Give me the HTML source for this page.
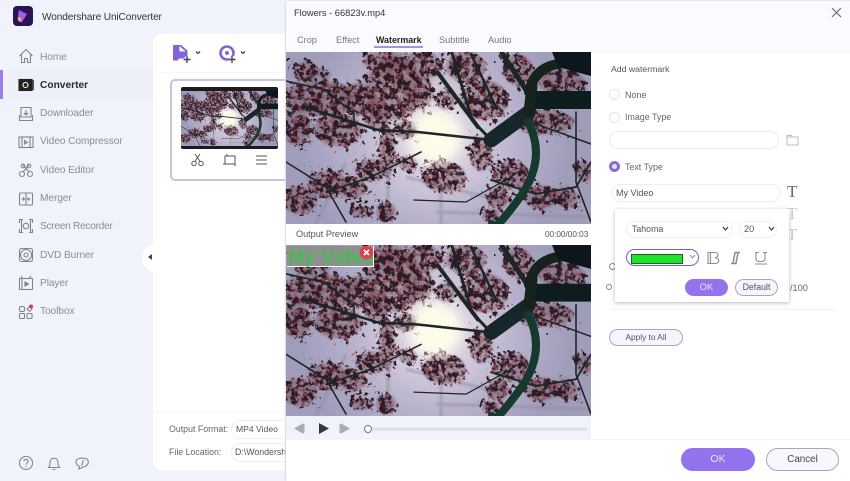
<!DOCTYPE html>
<html><head><meta charset="utf-8"><style>
html,body{margin:0;padding:0}
body{width:850px;height:481px;overflow:hidden;position:relative;background:#f0f3fb;font-family:"Liberation Sans",sans-serif;font-size:10px;color:#555}
.a{position:absolute;white-space:nowrap}
.nav{position:absolute;left:40px;font-size:10.2px;color:#8b8d94;letter-spacing:-.1px;line-height:14px;margin-top:1px}
.ic{position:absolute;left:18px;width:16px;height:16px;fill:none;stroke:#82858c;stroke-width:1.1}
.pill{position:absolute;box-sizing:border-box;border:1px solid #eceef3;border-radius:11px;background:#fff}
.radio{position:absolute;left:609px;width:11px;height:11px;box-sizing:border-box;border:1.5px solid #e3e4ea;border-radius:50%;background:#fff}
.t{position:absolute;white-space:nowrap;line-height:13px;color:#555}
</style></head><body>
<svg width="0" height="0" style="position:absolute"><defs>
<radialGradient id="sun" cx="149" cy="85" r="135" gradientUnits="userSpaceOnUse"><stop offset="0" stop-color="#fffdf0"/><stop offset=".13" stop-color="#f6f0ec"/><stop offset=".28" stop-color="#d6cfe0"/><stop offset=".6" stop-color="#b9b3cc"/><stop offset="1" stop-color="#a09dbb"/></radialGradient>
<filter id="n1" x="0" y="0" width="100%" height="100%" color-interpolation-filters="sRGB"><feTurbulence type="fractalNoise" baseFrequency=".17" numOctaves="3" seed="3" result="t"/><feDisplacementMap in="SourceGraphic" in2="t" scale="30" result="d"/><feColorMatrix in="t" type="matrix" values="0 0 0 0 0 0 0 0 0 0 0 0 0 0 0 9 0 0 0 -3.800" result="m"/><feComposite in="d" in2="m" operator="in"/></filter>
<filter id="n2" x="0" y="0" width="100%" height="100%" color-interpolation-filters="sRGB"><feTurbulence type="fractalNoise" baseFrequency=".25" numOctaves="2" seed="11" result="t"/><feDisplacementMap in="SourceGraphic" in2="t" scale="24" result="d"/><feColorMatrix in="t" type="matrix" values="0 0 0 0 0 0 0 0 0 0 0 0 0 0 0 7 0 0 0 -3.700" result="m"/><feComposite in="d" in2="m" operator="in"/></filter>
<filter id="bb"><feGaussianBlur stdDeviation="1.100"/></filter>
<filter id="b0"><feGaussianBlur stdDeviation=".35"/></filter>
<filter id="b1"><feGaussianBlur stdDeviation=".45"/></filter>
<filter id="b4"><feGaussianBlur stdDeviation="5"/></filter>
<g id="cl">
<ellipse cx="20" cy="20" rx="13" ry="10"/><ellipse cx="38" cy="23" rx="6" ry="6"/><ellipse cx="34" cy="46" rx="38" ry="17"/><ellipse cx="72" cy="47" rx="19" ry="16"/><ellipse cx="10" cy="76" rx="15" ry="17"/><ellipse cx="52" cy="78" rx="24" ry="16"/><ellipse cx="90" cy="62" rx="13" ry="15"/><ellipse cx="108" cy="36" rx="28" ry="32"/><ellipse cx="100" cy="10" rx="22" ry="11"/><ellipse cx="136" cy="14" rx="20" ry="14"/><ellipse cx="132" cy="40" rx="15" ry="17"/><ellipse cx="120" cy="78" rx="12" ry="9"/><ellipse cx="42" cy="132" rx="20" ry="13"/><ellipse cx="13" cy="148" rx="17" ry="14"/><ellipse cx="66" cy="136" rx="14" ry="11"/><ellipse cx="85" cy="118" rx="16" ry="11"/><ellipse cx="122" cy="112" rx="9" ry="7"/><ellipse cx="158" cy="125" rx="22" ry="15"/><ellipse cx="195" cy="102" rx="11" ry="17"/><ellipse cx="225" cy="123" rx="19" ry="14"/><ellipse cx="212" cy="146" rx="11" ry="11"/><ellipse cx="255" cy="145" rx="17" ry="12"/><ellipse cx="280" cy="145" rx="11" ry="10"/><ellipse cx="180" cy="15" rx="20" ry="15"/><ellipse cx="198" cy="48" rx="24" ry="20"/><ellipse cx="258" cy="70" rx="30" ry="12"/><ellipse cx="275" cy="30" rx="24" ry="12"/><ellipse cx="232" cy="18" rx="15" ry="15"/><ellipse cx="101" cy="100" rx="8" ry="26"/><ellipse cx="100" cy="160" rx="10" ry="10"/><ellipse cx="298" cy="120" rx="8" ry="10"/><ellipse cx="205" cy="164" rx="8" ry="7"/><ellipse cx="75" cy="160" rx="12" ry="6"/><ellipse cx="160" cy="48" rx="10" ry="10"/>
</g>
<symbol id="ph" viewBox="0 0 305 172" preserveAspectRatio="none">
<rect width="305" height="172" fill="url(#sun)"/>
<g stroke="#8f8b99" stroke-opacity=".55" fill="none" filter="url(#bb)"><path d="M102 172V100L98 20M155 172V130M30 172L60 110M150 160L305 165M120 125L220 150M75 30L110 20" stroke-width="3"/></g>
<use href="#cl" fill="#6a4a56" fill-opacity=".4" filter="url(#bb)"/>
<use href="#cl" fill="#2c1a24" filter="url(#n1)"/>
<use href="#cl" fill="#9a5058" fill-opacity=".8" filter="url(#n2)"/>
<ellipse cx="149" cy="85" rx="24" ry="26" fill="#fffde9" opacity=".8" filter="url(#b4)"/>
<g fill="none" stroke-linecap="round" filter="url(#b0)">
<g stroke="#1a2526"><path d="M166 1L186 68L205 88" stroke-width="3"/><path d="M152 21L192 75" stroke-width="4"/><path d="M216 1L240 38" stroke-width="5"/><path d="M185 2L210 55" stroke-width="2.500"/><path d="M19 55L92 78L132 80L205 88" stroke-width="2.500"/><path d="M0 29L40 38L68 62V72" stroke-width="1.600"/><path d="M0 110L40 135L60 170" stroke-width="1.600"/><path d="M40 140L85 125L135 100" stroke-width="1.600"/><path d="M205 128L250 142L290 135L305 110" stroke-width="1.800"/><path d="M250 72L305 92" stroke-width="1.500"/><path d="M290 60V130L305 170" stroke-width="1.600"/><path d="M128 148L180 150L225 125" stroke-width="1.200"/></g>
<path d="M205 88L242 61" stroke="#14262a" stroke-width="15"/>
<path d="M242 70Q262 108 232 148T206 172" stroke="#15382f" stroke-width="8"/>
<path d="M244 48H305" stroke="#0f1c1e" stroke-width="18" stroke-linecap="butt"/>
<path d="M243 40Q248 16 272 12T305 5" stroke="#14231f" stroke-width="10"/>
<path d="M243 60L246 35" stroke="#13201f" stroke-width="11"/>
<path d="M266 0L305 0V24L290 20L272 15Z" fill="#10191c"/>
</g>
</symbol>
</defs></svg>

<!-- sidebar -->
<svg class="a" style="left:13px;top:6px" width="20" height="20" viewBox="0 0 20 20"><rect width="20" height="20" rx="4" fill="#2a1458"/><path d="M6 4L14 8L9 16C6 15 4 12 6 4Z" fill="#a45be8"/><path d="M5 11C8 11 9 13 8 16C6 16 4 14 5 11Z" fill="#f4a470"/></svg>
<div class="a" style="left:42px;top:11px;font-size:10.100px;letter-spacing:-.12px;color:#333;line-height:14px">Wondershare UniConverter</div>
<div class="a" style="left:8px;top:70px;width:145px;height:29px;background:#edf0f8"></div>
<div class="a" style="left:0;top:70px;width:2.500px;height:29px;background:#9a80e8"></div>
<svg class="ic" style="top:48px" viewBox="0 0 16 16"><path d="M1.500 8L8 1.500L14.500 8M3.500 6.500V14.500H6.500V10.500H9.500V14.500H12.500V6.500"/></svg>
<div class="nav" style="top:50px">Home</div>
<svg class="ic" style="top:77px;stroke:#222" viewBox="0 0 16 16"><rect x="1" y="2.500" width="13" height="11" fill="#222"/><path d="M15.200 3V13" /><circle cx="7.500" cy="8" r="2.500" stroke="#fff"/></svg>
<div class="nav" style="top:78px;color:#2a2a30;font-weight:bold;letter-spacing:0">Converter</div>
<svg class="ic" style="top:106px" viewBox="0 0 16 16"><path d="M3 1.500H13V11H3ZM1.500 9V14.500H14.500V9M8 4V8.500M5.800 6.800L8 9L10.200 6.800"/></svg>
<div class="nav" style="top:106px">Downloader</div>
<svg class="ic" style="top:134px" viewBox="0 0 16 16"><rect x="1" y="3" width="14" height="10.500"/><path d="M4 3V13.500M12 3V13.500M6.500 6.500L9.500 8.300L6.500 10Z"/></svg>
<div class="nav" style="top:134px">Video Compressor</div>
<svg class="ic" style="top:162px" viewBox="0 0 16 16"><circle cx="4" cy="12" r="2.500"/><circle cx="12" cy="12" r="2.500"/><path d="M5 10L11 3M11 10L5 3"/><circle cx="5" cy="4" r="1.800"/><circle cx="11" cy="4" r="1.800"/></svg>
<div class="nav" style="top:163px">Video Editor</div>
<svg class="ic" style="top:191px" viewBox="0 0 16 16"><rect x="1.500" y="2" width="13" height="12" rx="1"/><path d="M8 2V14M3.500 8H6.500M5 6.500L6.500 8L5 9.500M12.500 8H9.500M11 6.500L9.500 8L11 9.500"/></svg>
<div class="nav" style="top:191px">Merger</div>
<svg class="ic" style="top:218px" viewBox="0 0 16 16"><path d="M1.500 5V1.500H5M11 1.500H14.500V5M1.500 11V14.500H5M11 14.500H14.500V11M3.500 1.500V14.500M12.500 1.500V14.500"/><circle cx="8" cy="8" r="2.800"/></svg>
<div class="nav" style="top:219px;letter-spacing:-.3px">Screen Recorder</div>
<svg class="ic" style="top:247px" viewBox="0 0 16 16"><rect x="1.500" y="1.500" width="13" height="13" rx="2"/><circle cx="8" cy="8" r="5.500"/><circle cx="8" cy="8" r="2"/></svg>
<div class="nav" style="top:248px">DVD Burner</div>
<svg class="ic" style="top:275px" viewBox="0 0 16 16"><rect x="1.500" y="3.500" width="13" height="11"/><path d="M4 3.500V14.500M4.500 3.500L3 1M11 3.500L13 .8"/><path d="M7 7L10.500 9L7 11Z" fill="#777a82"/></svg>
<div class="nav" style="top:276px">Player</div>
<svg class="ic" style="top:304px" viewBox="0 0 16 16"><rect x="1.500" y="2.500" width="5" height="5" rx="1.500"/><rect x="1.500" y="9.500" width="5" height="5" rx="1"/><rect x="9" y="9.500" width="5" height="5" rx="1"/><path d="M9 5L11.500 2.500L14 5L11.500 7.500Z"/><circle cx="13" cy="2.500" r="2" fill="#c9434d" stroke="none"/></svg>
<div class="nav" style="top:304px">Toolbox</div>
<svg class="ic" style="top:455px" viewBox="0 0 16 16"><circle cx="8" cy="8" r="6.500"/><path d="M5.800 6.200C6 3.800 10 3.800 10.200 6.200C10.300 7.800 8 7.800 8 9.800M8 11.200V12.500"/></svg>
<svg class="ic" style="top:455px;left:46px" viewBox="0 0 16 16"><path d="M2.500 12.500C4.500 10.500 3.500 8 4.500 5.500C5.500 2.500 10.500 2.500 11.500 5.500C12.500 8 11.500 10.500 13.500 12.500ZM6.500 14.500H9.500"/></svg>
<svg class="ic" style="top:455px;left:74px" viewBox="0 0 16 16"><path d="M2 6.500C2 3.500 7 2.500 12 3.500C15 4.500 15 9 12 11L8 12.500L5 14L5.500 11.500C3 10.500 2 8.500 2 6.500ZM9.500 5L7.500 11"/></svg>

<!-- main panel -->
<div class="a" style="left:153px;top:34px;width:140px;height:436px;background:#fff;border-radius:8px 0 0 8px"></div>
<div class="a" style="left:153px;top:72px;width:133px;height:1px;background:#f8f8fb"></div>
<div class="a" style="left:142px;top:244px;width:16px;height:28px;background:#fff;border-radius:14px 0 0 14px"></div>
<div class="a" style="left:148px;top:254px;width:0;height:0;border:3.200px solid transparent;border-right:4px solid #444;border-left:0"></div>
<svg class="a" style="left:172px;top:43px" width="80" height="22" viewBox="0 0 80 22"><path d="M1.500 2.500H9L15 8V15H7L5.500 17H1.500Z" fill="#8363dd" stroke="#8363dd"/><path d="M8 3.500V8H13" fill="#fff" stroke="#fff"/><path d="M15 13V20M11.500 16.500H18.500" stroke="#fff" stroke-width="3.500"/><path d="M15 13V20M11.500 16.500H18.500" stroke="#444" stroke-width="1.400"/><path d="M24 8.500L26 10.500L28 8.500" stroke="#444" fill="none" stroke-width="1.300"/><circle cx="55" cy="10" r="6.500" fill="none" stroke="#8363dd" stroke-width="2.600"/><circle cx="55" cy="10" r="2" fill="#8363dd"/><path d="M60 13V20M56.500 16.500H63.500" stroke="#fff" stroke-width="3.500"/><path d="M60 13V20M56.500 16.500H63.500" stroke="#444" stroke-width="1.400"/><path d="M69 8.500L71 10.500L73 8.500" stroke="#444" fill="none" stroke-width="1.300"/></svg>
<div class="a" style="left:170px;top:79px;width:125px;height:102px;box-sizing:border-box;border:2px solid #c6c4de;border-radius:5px;background:#fff"></div>
<div class="a" style="left:181px;top:87px;width:97px;height:62px;background:#1b1a1e;border-radius:2px"></div>
<svg class="a" style="left:181px;top:91px" width="97" height="55"><use href="#ph" width="97" height="55"/></svg>
<svg class="a" style="left:190px;top:153px" width="82" height="14" viewBox="0 0 82 14" fill="none" stroke="#555" stroke-width="1"><circle cx="4" cy="10.500" r="2.200"/><circle cx="11" cy="10.500" r="2.200"/><path d="M5 8.500L10 1M10 8.500L5 1"/><path d="M35 3H45V11H35ZM37 1V3M45 11V13M33 11H35"/><path d="M66 3H77M66 7H77M66 11H77"/></svg>
<div class="a" style="left:153px;top:412px;width:133px;height:1px;background:#f4f5f8"></div>
<div class="t" style="left:169px;top:423px;font-size:8.800px;color:#666">Output Format:</div>
<div class="t" style="left:169px;top:446px;font-size:8.800px;color:#666">File Location:</div>
<div class="pill" style="left:231px;top:420px;width:70px;height:19px"></div>
<div class="pill" style="left:231px;top:443px;width:70px;height:19px"></div>
<div class="t" style="left:236px;top:423px;font-size:8.600px">MP4 Video</div>
<div class="t" style="left:235px;top:446px;font-size:8.800px">D:\Wondershare</div>

<!-- dialog -->
<div class="a" style="left:286px;top:1px;width:564px;height:480px;background:#fff;box-shadow:-1px 0 1px #d8dae2"></div>
<div class="a" style="left:286px;top:0;width:564px;height:1px;background:#e6e8ef"></div>
<div class="a" style="left:286px;top:1px;width:564px;height:51px;background:#f9fbfe"></div>
<div class="t" style="left:294px;top:7px;font-size:9.300px;color:#333">Flowers - 66823v.mp4</div>
<svg class="a" style="left:831px;top:7px" width="11" height="11" viewBox="0 0 11 11"><path d="M1 1L10 10M10 1L1 10" stroke="#666" stroke-width="1.100"/></svg>
<div class="t" style="left:297px;top:34px;font-size:9.200px;color:#777">Crop</div>
<div class="t" style="left:336px;top:34px;font-size:9.200px;color:#777">Effect</div>
<div class="t" style="left:376px;top:34px;font-size:8.900px;color:#222;font-weight:bold">Watermark</div>
<div class="a" style="left:374px;top:46px;width:49px;height:1.500px;background:#a793dc"></div>
<div class="t" style="left:439px;top:34px;font-size:9.200px;color:#777">Subtitle</div>
<div class="t" style="left:488px;top:34px;font-size:9.200px;color:#777">Audio</div>
<div class="a" style="left:591px;top:52px;width:259px;height:1px;background:#f4f5f8"></div>

<svg class="a" style="left:286px;top:52px" width="305" height="172"><use href="#ph" width="305" height="172"/></svg>
<div class="t" style="left:296px;top:228px;font-size:9.100px;color:#555">Output Preview</div>
<div class="t" style="left:545px;top:228px;font-size:8.200px;color:#555">00:00/00:03</div>
<svg class="a" style="left:286px;top:245px" width="305" height="171"><use href="#ph" width="305" height="171"/></svg>
<div class="a" style="left:287px;top:246px;width:87px;height:21px;background:#8d908c;box-sizing:border-box;border-bottom:1px solid #fff;border-right:1px solid #fff"></div>
<div class="a" style="left:289px;top:247px;font-size:18px;color:#27d03a;line-height:20px;letter-spacing:1.400px;filter:url(#b1)">My Video</div>
<svg class="a" style="left:359px;top:245px" width="15" height="15" viewBox="0 0 15 15"><circle cx="7.500" cy="7.500" r="6.800" fill="#e0414d"/><path d="M5 5L10 10M10 5L5 10" stroke="#fff" stroke-width="1.600"/></svg>

<div class="a" style="left:286px;top:416px;width:305px;height:23px;background:#f1f3fa"></div>
<svg class="a" style="left:286px;top:416px" width="305" height="23" viewBox="0 0 305 23"><path d="M9 12.500L17 8V17ZM18 8V17" fill="#a9acb7" stroke="#a9acb7"/><path d="M33 7V18L43 12.500Z" fill="#33363b"/><path d="M55 8V17L63 12.500ZM54 8V17" fill="#a9acb7" stroke="#a9acb7"/><path d="M86 13H301" stroke="#dfe1e9" stroke-width="3"/><circle cx="82" cy="13" r="3.500" fill="#fff" stroke="#777" stroke-width="1"/></svg>

<!-- right panel -->
<div class="t" style="left:611px;top:63px;font-size:8.700px;color:#555">Add watermark</div>
<div class="radio" style="top:89px"></div>
<div class="t" style="left:625px;top:89px;font-size:9px;color:#666">None</div>
<div class="radio" style="top:112px"></div>
<div class="t" style="left:625px;top:111px;font-size:8.900px;color:#666">Image Type</div>
<div class="pill" style="left:609px;top:131px;width:170px;height:18px;border-radius:9px"></div>
<svg class="a" style="left:786px;top:134px" width="13" height="12" viewBox="0 0 13 12" fill="none" stroke="#bbbcc3"><path d="M1 1.500H5.500L6.500 3H12V11H1ZM1 3H6.500"/></svg>
<div class="a" style="left:609px;top:161px;width:11px;height:11px;box-sizing:border-box;border:3px solid #8b6bd3;border-radius:50%;background:#e8e2f6"></div>
<div class="t" style="left:625px;top:161px;font-size:8.900px;color:#666">Text Type</div>
<div class="pill" style="left:611px;top:184px;width:170px;height:18px;border-radius:9px"></div>
<div class="t" style="left:616px;top:187px;font-size:9px;color:#555">My Video</div>
<div class="t" style="left:787px;top:183px;font-family:'Liberation Serif',serif;font-size:17px;line-height:18px;color:#666">T</div>
<div class="t" style="left:787px;top:205px;font-family:'Liberation Serif',serif;font-size:17px;line-height:18px;color:#ccc">T</div>
<div class="t" style="left:787px;top:226px;font-family:'Liberation Serif',serif;font-size:17px;line-height:18px;color:#ccc">T</div>
<div class="a" style="left:609px;top:263px;width:5px;height:5px;border:1px solid #888;border-radius:50%"></div>
<div class="a" style="left:606px;top:284px;width:4px;height:4px;border:1px solid #888;border-radius:50%"></div>
<div class="t" style="left:790px;top:282px;font-size:9.200px;color:#666">/100</div>
<div class="a" style="left:609px;top:309px;width:226px;height:1px;background:#f1f1f4"></div>
<div class="a" style="left:609px;top:329px;width:74px;height:17px;box-sizing:border-box;border:1px solid #a9a6c0;border-radius:9px;background:#f7f4fd;text-align:center;font-size:8.300px;line-height:15px;color:#555">Apply to All</div>

<!-- popup -->
<div class="a" style="left:615px;top:209px;width:174px;height:93px;background:#fff;box-shadow:0 1px 4px rgba(0,0,0,.28)"></div>
<div class="pill" style="left:626px;top:221px;width:107px;height:17px;border-radius:9px;border-color:#f0f0f4"></div>
<div class="t" style="left:632px;top:223px;font-size:8.800px;color:#555">Tahoma</div>
<svg class="a" style="left:722px;top:226px" width="7" height="6"><path d="M1 1L3.500 4L6 1" fill="none" stroke="#444" stroke-width="1.300"/></svg>
<div class="pill" style="left:739px;top:221px;width:38px;height:17px;border-radius:9px;border-color:#f0f0f4"></div>
<div class="t" style="left:744px;top:223px;font-size:9.200px;color:#555">20</div>
<svg class="a" style="left:768px;top:226px" width="7" height="6"><path d="M1 1L3.500 4L6 1" fill="none" stroke="#444" stroke-width="1.300"/></svg>
<div class="a" style="left:626px;top:249px;width:73px;height:17px;box-sizing:border-box;border:1.300px solid #7a5fc8;border-radius:9px;background:#fff"></div>
<div class="a" style="left:631px;top:254px;width:50px;height:8px;background:#1fe22a;border:.7px solid #245f28"></div>
<svg class="a" style="left:689px;top:254px" width="7" height="6"><path d="M1 1L3.500 4L6 1" fill="none" stroke="#999" stroke-width="1.200"/></svg>
<svg class="a" style="left:707px;top:251px" width="66" height="14" viewBox="0 0 66 14" fill="none" stroke="#8c8c92" stroke-width="1.100"><path d="M1 1.500H8C12 1.500 12 6.500 8 6.700C13 7 13 12.500 8 12.500H1ZM3.500 1.500V12.500"/><path d="M33 1.500H28L26 12.500H24M31 1.500L29 12.500H25" stroke-width="1.500"/><path d="M49 1.500V8C49 11.500 58 11.500 58 8V1.500M48 1.500H52M56 1.500H60M48 13H60"/></svg>
<div class="a" style="left:685px;top:279px;width:43px;height:17px;background:#9372ee;border-radius:9px;text-align:center;color:#e9e2fb;font-size:9.500px;line-height:17px">OK</div>
<div class="a" style="left:735px;top:279px;width:43px;height:17px;box-sizing:border-box;border:1px solid #a9a6c0;border-radius:9px;background:#f7f4fd;text-align:center;font-size:8.800px;line-height:15px;color:#555">Default</div>

<!-- footer -->
<div class="a" style="left:286px;top:439px;width:564px;height:1px;background:#f4f5f8"></div>
<div class="a" style="left:681px;top:448px;width:74px;height:23px;background:#9372ee;border-radius:12px;text-align:center;color:#e9e2fb;font-size:10.500px;line-height:23px">OK</div>
<div class="a" style="left:766px;top:448px;width:73px;height:23px;box-sizing:border-box;border:1px solid #a9a6b8;border-radius:12px;background:#f9f7fd;text-align:center;color:#444;font-size:9.800px;line-height:21px">Cancel</div>
</body></html>
